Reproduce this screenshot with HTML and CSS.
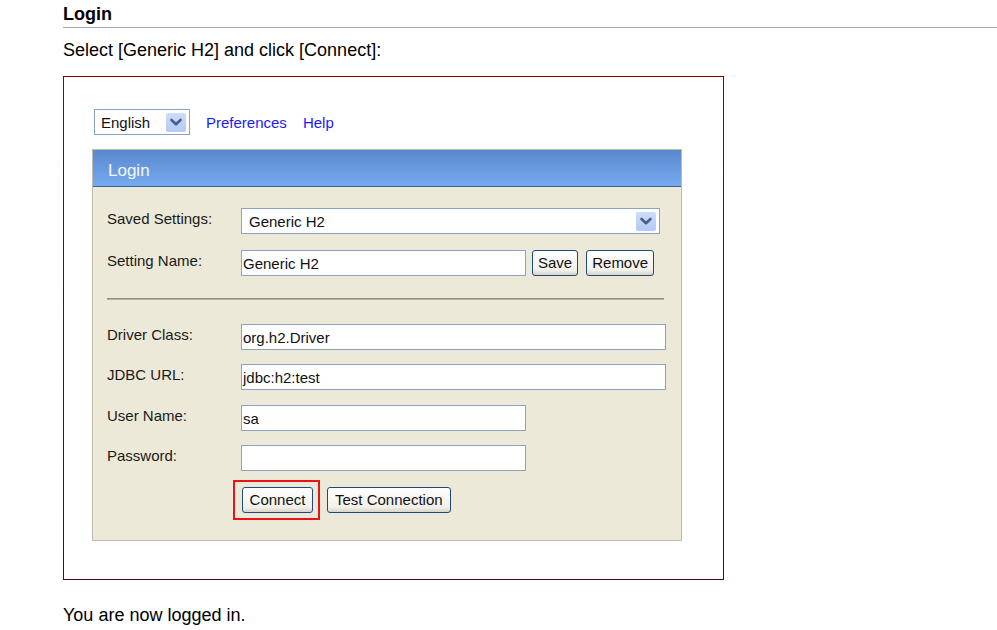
FILE: index.html
```html
<!DOCTYPE html>
<html>
<head>
<meta charset="utf-8">
<title>Login</title>
<link rel="stylesheet" href="styles.css">
</head>
<body>
<div class="page">
  <h3 class="heading">Login</h3>
  <p class="text first">Select [Generic H2] and click [Connect]:</p>
  <div class="shot">
    <div class="toolbar">
      <div class="select lang">
        <span class="sel-text">English</span>
        <span class="drop"><svg width="20" height="19" viewBox="0 0 20 19"><polyline points="5.5,7 10,11.2 14.5,7" fill="none" stroke="#4a5f86" stroke-width="2.6" stroke-linecap="round" stroke-linejoin="round"/></svg></span>
      </div>
      <a class="link" href="#">Preferences</a>
      <a class="link" href="#">Help</a>
    </div>
    <div class="panel">
      <div class="panel-head">Login</div>
      <div class="panel-body">
        <div class="row">
          <span class="label">Saved Settings:</span>
          <div class="select saved">
            <span class="sel-text">Generic H2</span>
            <span class="drop"><svg width="20" height="19" viewBox="0 0 20 19"><polyline points="5.5,7 10,11.2 14.5,7" fill="none" stroke="#4a5f86" stroke-width="2.6" stroke-linecap="round" stroke-linejoin="round"/></svg></span>
          </div>
        </div>
        <div class="row gap16">
          <span class="label">Setting Name:</span>
          <div class="input short">Generic H2</div>
          <span class="btn save">Save</span>
          <span class="btn remove">Remove</span>
        </div>
        <div class="sep"></div>
        <div class="row">
          <span class="label">Driver Class:</span>
          <div class="input long">org.h2.Driver</div>
        </div>
        <div class="row gap14">
          <span class="label">JDBC URL:</span>
          <div class="input long">jdbc:h2:test</div>
        </div>
        <div class="row gap15">
          <span class="label">User Name:</span>
          <div class="input short">sa</div>
        </div>
        <div class="row gap14">
          <span class="label">Password:</span>
          <div class="input short"></div>
        </div>
        <div class="row buttons">
          <span class="label"></span>
          <div class="highlight"><span class="btn connect">Connect</span></div>
          <span class="btn test">Test Connection</span>
        </div>
      </div>
    </div>
  </div>
  <p class="text last">You are now logged in.</p>
</div>
</body>
</html>
```

FILE: styles.css
```css
html, body {
  margin: 0;
  padding: 0;
  background: #fff;
}

body {
  font-family: "Liberation Sans", Arial, sans-serif;
  color: #000;
}

.page {
  padding-left: 63px;
}

.heading {
  margin: 0;
  padding: 4px 0 2px;
  font-size: 18px;
  line-height: 21px;
  font-weight: bold;
  border-bottom: 1px solid #a8a8a8;
}

.text {
  margin: 0;
  font-size: 18px;
  line-height: 21px;
}

.text.first {
  margin-top: 12px;
  margin-bottom: 15px;
}

.text.last {
  margin-top: 25px;
}

.shot {
  box-sizing: border-box;
  width: 661px;
  height: 504px;
  border: 1px solid #860000;
  border-image: linear-gradient(to bottom, #8a0000, #560808) 1;
  padding: 32px 0 0 28px;
  font-family: "Liberation Sans", Arial, sans-serif;
  font-size: 15px;
}

.toolbar {
  display: flex;
  align-items: center;
  height: 26px;
  margin-left: 2px;
  margin-bottom: 14px;
}

.select {
  box-sizing: border-box;
  display: flex;
  align-items: center;
  height: 26px;
  border: 1px solid #8aa5c4;
  background: #fff;
}

.sel-text {
  flex: 1;
  line-height: 22px;
  padding-top: 1px;
  color: #111;
}

.lang {
  width: 96px;
  padding-left: 6px;
  padding-right: 3px;
}

.saved {
  width: 419px;
  padding-left: 7px;
  padding-right: 3px;
}

.drop {
  display: block;
  width: 20px;
  height: 19px;
  border-radius: 2px;
  background: linear-gradient(to bottom, #cddcfc, #b4c9f5);
}

.drop svg {
  display: block;
}

.link {
  margin-left: 16px;
  color: #1a1aff;
  text-decoration: none;
  line-height: 20px;
  padding-top: 1px;
}

.panel {
  box-sizing: border-box;
  width: 590px;
  border: 1px solid #bfbcae;
  background: #ece9d8;
}

.panel-head {
  height: 37px;
  box-sizing: border-box;
  padding: 6px 0 0 15px;
  line-height: 30px;
  font-size: 17px;
  color: #f4f8ff;
  background: linear-gradient(to bottom, #5a87cd, #76abef);
  border-bottom: 1px solid #3f5f8e;
}

.panel-body {
  padding: 21px 14px 20px 14px;
}

.row {
  display: flex;
  align-items: flex-start;
}

.row.gap16 {
  margin-top: 16px;
}

.row.gap14 {
  margin-top: 14px;
}

.row.gap15 {
  margin-top: 15px;
}

.label {
  width: 134px;
  flex: none;
  line-height: 20px;
  padding-top: 1px;
  color: #1a1a1a;
}

.input {
  box-sizing: border-box;
  height: 26px;
  border: 1px solid #8aa5c4;
  background: #fff;
  padding: 2px 0 0 1px;
  line-height: 22px;
  color: #111;
}

.input.short {
  width: 285px;
}

.input.long {
  width: 425px;
}

.btn {
  box-sizing: border-box;
  display: inline-block;
  height: 26px;
  line-height: 24px;
  padding: 0 5px;
  border: 1px solid #1f4a7c;
  border-radius: 3px;
  background: linear-gradient(to bottom, #ffffff, #f1f0ea 80%, #d9d4c6);
  color: #111;
  white-space: nowrap;
}

.btn.save {
  margin-left: 6px;
}

.btn.remove {
  margin-left: 8px;
}

.sep {
  width: 557px;
  margin: 22px 0 24px;
  border-top: 1px solid #8f8c80;
  border-bottom: 1px solid #b5b2a4;
}

.row.buttons {
  margin-top: 9px;
  align-items: center;
}

.row.buttons .label {
  width: 126px;
}

.highlight {
  border: 2px solid #e8141a;
  padding: 5px 5px 5px 7px;
}

.btn.connect {
  display: block;
  width: 71px;
  padding: 0;
  text-align: center;
}

.btn.test {
  margin-left: 7px;
  padding: 0 7px;
}
```
